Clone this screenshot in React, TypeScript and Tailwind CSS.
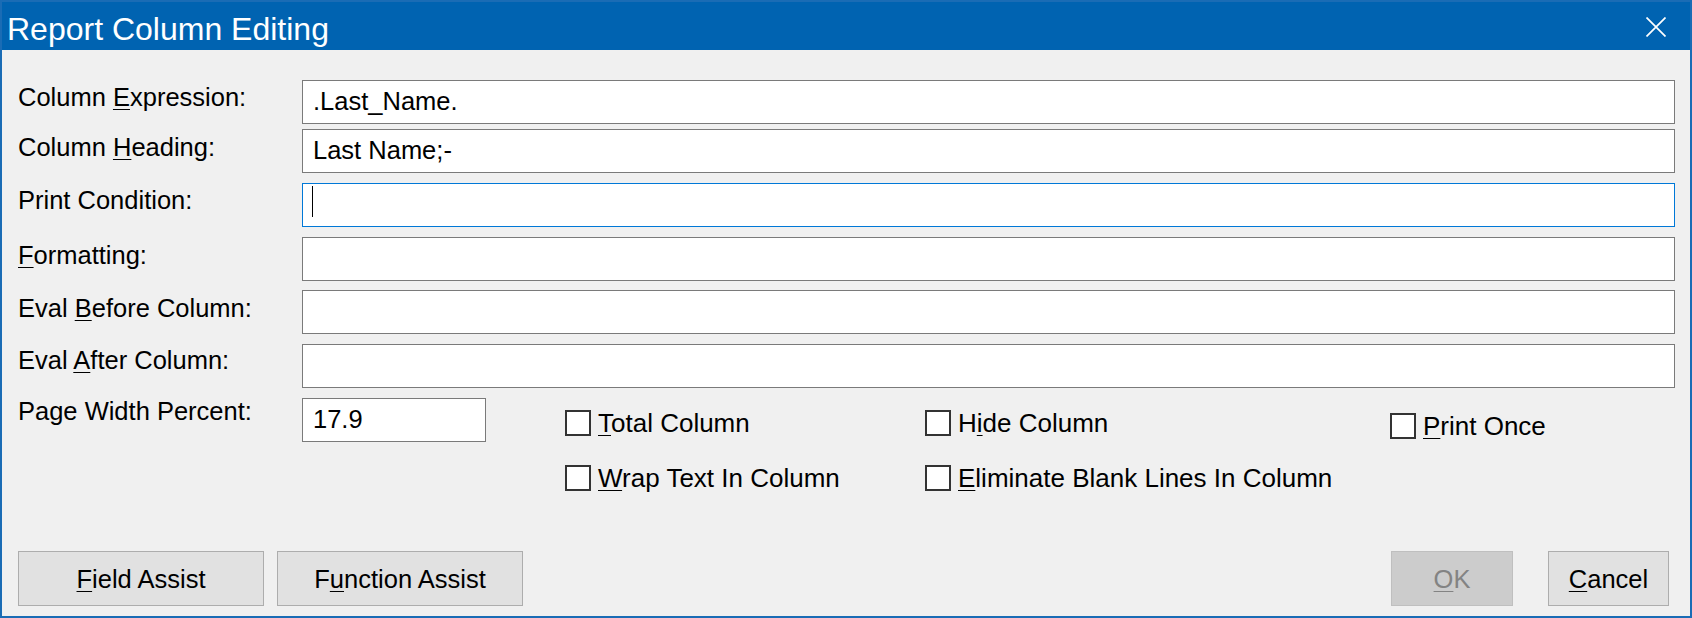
import React from 'react';

type Row = {
  pre: string;
  key?: string;
  post?: string;
  value?: string;
  focused?: boolean;
  gap: string;
  labelPad: string;
};

const rows: Row[] = [
  { pre: 'Column ', key: 'E', post: 'xpression:', value: '.Last_Name.', gap: 'mt-[30px]', labelPad: 'pt-[2px]' },
  { pre: 'Column ', key: 'H', post: 'eading:', value: 'Last Name;-', gap: 'mt-[5px]', labelPad: 'pt-[3px]' },
  { pre: 'Print Condition:', focused: true, gap: 'mt-[10px]', labelPad: 'pt-[2px]' },
  { pre: '', key: 'F', post: 'ormatting:', gap: 'mt-[10px]', labelPad: 'pt-[3px]' },
  { pre: 'Eval ', key: 'B', post: 'efore Column:', gap: 'mt-[9px]', labelPad: 'pt-[3px]' },
  { pre: 'Eval ', key: 'A', post: 'fter Column:', gap: 'mt-[10px]', labelPad: 'pt-[1px]' },
];

function Key({ children }: { children: React.ReactNode }) {
  return <u className="decoration-1 underline-offset-[3px]">{children}</u>;
}

function Check({ pre = '', k, post }: { pre?: string; k: string; post: string }) {
  return (
    <div className="flex items-center gap-[7px]">
      <div className="w-[26px] h-[26px] border-2 border-[#333333] bg-white" />
      <span className="leading-none text-[26px]">
        {pre}
        <Key>{k}</Key>
        {post}
      </span>
    </div>
  );
}

function TextBox({ value, focused }: { value?: string; focused?: boolean }) {
  return (
    <div
      className={
        focused
          ? 'flex-1 h-[44px] bg-white border border-[#0078d7] flex items-center pl-[9px]'
          : 'flex-1 h-[44px] bg-white border border-[#7a7a7a] flex items-center pl-[10px]'
      }
    >
      {focused ? <span className="w-px h-[31px] bg-black -mt-[7px]" /> : <span className="leading-none">{value}</span>}
    </div>
  );
}

export default function App() {
  return (
    <div className="w-[1692px] h-[618px] flex flex-col border-2 border-[#1a6cb5] bg-[#f0f0f0] text-black text-[25.5px] font-['Liberation_Sans',Arial,sans-serif]">
      {/* Title bar */}
      <div className="h-[48px] bg-[#0063b1] flex items-center justify-between pl-[5px] pr-[24px] text-white">
        <span className="text-[32px] leading-none pt-[5px]">Report Column Editing</span>
        <svg width="20" height="20" viewBox="0 0 20 20" className="mt-[1px]">
          <path d="M0.5 0.5 L19.5 19.5 M19.5 0.5 L0.5 19.5" stroke="white" strokeWidth="1.7" />
        </svg>
      </div>

      <div className="flex-1 flex flex-col pl-[16px] pr-[15px] pb-[10px]">
        {rows.map((r, i) => (
          <div key={i} className={`flex items-start ${r.gap}`}>
            <div className={`w-[284px] shrink-0 leading-[30px] ${r.labelPad}`}>
              {r.pre}
              {r.key && <Key>{r.key}</Key>}
              {r.post}
            </div>
            <TextBox value={r.value} focused={r.focused} />
          </div>
        ))}

        {/* Page width + options */}
        <div className="flex items-start mt-[10px]">
          <div className="w-[284px] shrink-0 leading-[30px] -mt-[2px]">Page Width Percent:</div>
          <div className="w-[184px] h-[44px] bg-white border border-[#7a7a7a] flex items-center pl-[10px] shrink-0">
            <span className="leading-none">17.9</span>
          </div>
          <div className="ml-[79px] grid grid-cols-[360px_465px_auto] gap-y-[26px] pt-[9px]">
            <Check k="T" post="otal Column" />
            <Check pre="H" k="i" post="de Column" />
            <div className="mt-[6px]">
              <Check k="P" post="rint Once" />
            </div>
            <Check k="W" post="rap Text In Column" />
            <Check k="E" post="liminate Blank Lines In Column" />
          </div>
        </div>

        {/* Buttons */}
        <div className="mt-auto flex items-end pr-[6px]">
          <button className="w-[246px] h-[55px] bg-[#e1e1e1] border border-[#adadad] leading-none pt-[3px]">
            <Key>F</Key>ield Assist
          </button>
          <button className="w-[246px] h-[55px] ml-[13px] bg-[#e1e1e1] border border-[#adadad] leading-none pt-[3px]">
            F<Key>u</Key>nction Assist
          </button>
          <button className="w-[122px] h-[55px] ml-auto bg-[#cccccc] border border-[#bfbfbf] text-[#838383] leading-none pt-[3px]">
            <Key>O</Key>K
          </button>
          <button className="w-[121px] h-[55px] ml-[35px] bg-[#e1e1e1] border border-[#adadad] leading-none pt-[3px]">
            <Key>C</Key>ancel
          </button>
        </div>
      </div>
    </div>
  );
}
